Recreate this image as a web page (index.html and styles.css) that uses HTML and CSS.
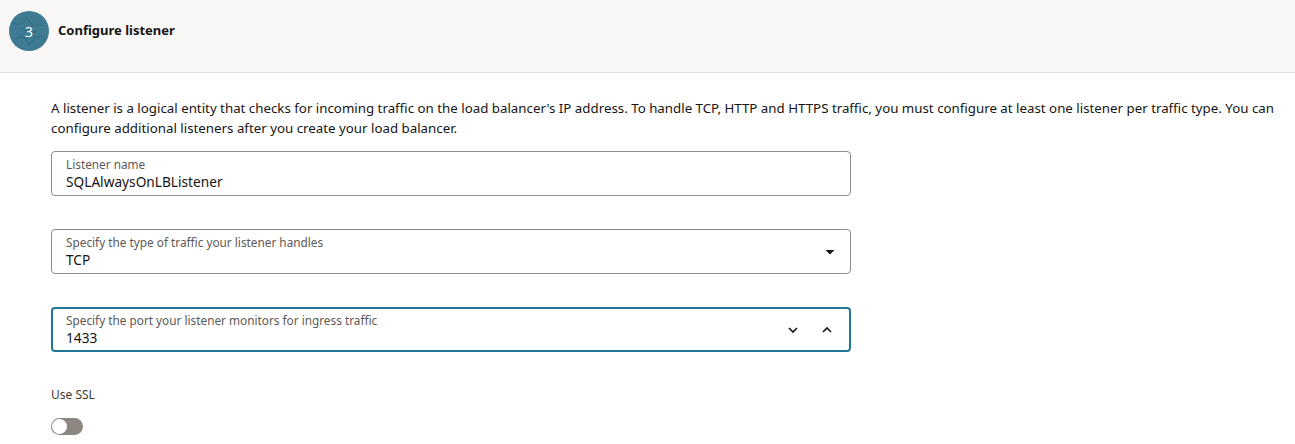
FILE: index.html
```html
<!DOCTYPE html>
<html>
<head>
<meta charset="utf-8">
<link rel="stylesheet" href="styles.css">
</head>
<body>
<header class="step-header">
  <div class="step-badge">
    <svg class="badge-bg" width="40" height="40" viewBox="0 0 40 40">
      <circle cx="20" cy="20" r="20" fill="#3e7a92"/>
      <g fill="none" stroke="#2f6679" stroke-width="0.8" opacity="0.8">
        <path d="M4 12 Q14 16 18 6"/>
        <path d="M18 6 Q22 18 34 14"/>
        <path d="M6 28 Q16 22 20 34"/>
        <path d="M20 34 Q26 24 36 26"/>
        <path d="M12 16 Q18 24 28 20"/>
      </g>
    </svg>
    <span class="badge-num">3</span>
  </div>
  <h2 class="step-title">Configure listener</h2>
</header>

<main class="content">
  <p class="intro">A listener is a logical entity that checks for incoming traffic on the load balancer's IP address. To handle TCP, HTTP and HTTPS traffic, you must configure at least one listener per traffic type. You can configure additional listeners after you create your load balancer.</p>

  <div class="field">
    <div class="field-text">
      <span class="field-label">Listener name</span>
      <span class="field-value">SQLAlwaysOnLBListener</span>
    </div>
  </div>

  <div class="field">
    <div class="field-text">
      <span class="field-label">Specify the type of traffic your listener handles</span>
      <span class="field-value">TCP</span>
    </div>
    <div class="field-icons">
      <svg width="12" height="12" viewBox="0 0 12 12"><path d="M1.5 4 L10.5 4 L6 8.5 Z" fill="#161513"/></svg>
    </div>
  </div>

  <div class="field focused">
    <div class="field-text">
      <span class="field-label">Specify the port your listener monitors for ingress traffic</span>
      <span class="field-value">1433</span>
    </div>
    <div class="field-icons spin">
      <svg width="12" height="12" viewBox="0 0 12 12"><path d="M2 4 L6 8 L10 4" fill="none" stroke="#161513" stroke-width="1.6"/></svg>
      <svg width="12" height="12" viewBox="0 0 12 12"><path d="M2 8 L6 4 L10 8" fill="none" stroke="#161513" stroke-width="1.6"/></svg>
    </div>
  </div>

  <div class="switch-group">
    <span class="switch-label">Use SSL</span>
    <span class="switch"><span class="knob"></span></span>
  </div>
</main>
</body>
</html>
```

FILE: styles.css
```css
* { box-sizing: border-box; }

body {
  margin: 0;
  font-family: "Noto Sans", "Open Sans", sans-serif;
  color: #161513;
  background: #ffffff;
}

.step-header {
  height: 73px;
  background: #f9f8f7;
  border-bottom: 1px solid #e5e2de;
  display: flex;
  align-items: flex-start;
  padding: 11px 0 0 9px;
}

.step-badge {
  position: relative;
  width: 40px;
  height: 40px;
  flex: none;
}

.badge-bg { display: block; }

.badge-num {
  position: absolute;
  inset: 0;
  display: flex;
  align-items: center;
  justify-content: center;
  color: #ffffff;
  font-size: 14px;
}

.step-title {
  margin: 9px 0 0 9px;
  font-size: 13px;
  font-weight: 700;
  line-height: 20px;
}

.content {
  padding: 25px 0 0 51px;
}

.intro {
  margin: 0;
  font-size: 13.3px;
  line-height: 20px;
  padding-right: 2px;
}

.field {
  width: 800px;
  height: 45px;
  border: 1px solid #8f8c88;
  border-radius: 4px;
  display: flex;
  align-items: center;
  padding: 0 14px 0 14px;
  margin-top: 33px;
}

.intro + .field { margin-top: 13px; }

.field.focused {
  border: 2px solid #227594;
  padding: 0 13px;
}

.field-text {
  flex: 1;
  display: flex;
  flex-direction: column;
  padding-top: 1px;
}

.field-label {
  font-size: 11.8px;
  line-height: 15px;
  color: #5d5a56;
}

.field-value {
  font-size: 13.7px;
  line-height: 19px;
  color: #161513;
}

.field-icons {
  display: flex;
  gap: 22px;
  align-items: center;
}

.field-icons svg { display: block; }

.field-icons.spin { margin-right: 3px; }

.switch-group {
  display: flex;
  flex-direction: column;
  align-items: flex-start;
  margin-top: 35px;
}

.switch-label {
  font-size: 12px;
  line-height: 16px;
  color: #3d3a37;
}

.switch {
  margin-top: 15px;
  width: 32px;
  height: 17px;
  border-radius: 9px;
  background: #8b8680;
  display: flex;
  align-items: center;
  padding-left: 1px;
}

.knob {
  width: 15px;
  height: 15px;
  border-radius: 50%;
  background: #ffffff;
}
```
